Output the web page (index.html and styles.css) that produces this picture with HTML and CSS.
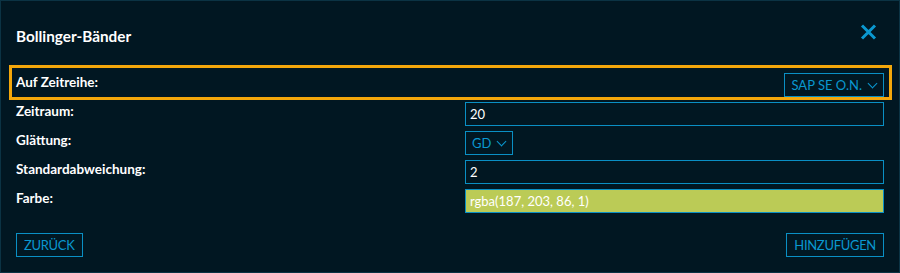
FILE: index.html
```html
<!DOCTYPE html>
<html lang="de">
<head>
    <meta charset="UTF-8">
    <meta name="viewport" content="width=device-width, initial-scale=1.0">
    <title>Bollinger-Bänder</title>
    <link rel="stylesheet" href="styles.css">
</head>
<body>
    <div class="dialog">
        <div class="dialog-header">
            <h1 class="dialog-title">Bollinger-Bänder</h1>
            <button class="close-button" aria-label="Schließen">
                <svg width="17" height="16" viewBox="0 0 17 16">
                    <path d="M2 1.5 L15 14.5 M15 1.5 L2 14.5" stroke="currentColor" stroke-width="3" fill="none"/>
                </svg>
            </button>
        </div>

        <div class="form">
            <div class="form-row highlight">
                <label>Auf Zeitreihe:</label>
                <button class="select select-right">SAP SE O.N. <span class="chevron"></span></button>
            </div>
            <div class="form-row">
                <label>Zeitraum:</label>
                <div class="input">20</div>
            </div>
            <div class="form-row">
                <label>Glättung:</label>
                <button class="select">GD <span class="chevron"></span></button>
            </div>
            <div class="form-row">
                <label>Standardabweichung:</label>
                <div class="input">2</div>
            </div>
            <div class="form-row">
                <label>Farbe:</label>
                <div class="input color-input" style="background-color: rgba(187, 203, 86, 1);">rgba(187, 203, 86, 1)</div>
            </div>
        </div>

        <div class="dialog-footer">
            <button class="text-button">Zurück</button>
            <button class="text-button">Hinzufügen</button>
        </div>
    </div>
</body>
</html>
```

FILE: styles.css
```css
body {
    margin: 0;
    background: #011722;
    font-family: Lato, "Liberation Sans", sans-serif;
}
.dialog {
    box-sizing: border-box;
    width: 900px;
    height: 273px;
    border: 1px solid #0b3344;
    background: #011722;
    padding: 0 15px 15px 15px;
    display: flex;
    flex-direction: column;
}
.dialog-header {
    display: flex;
    justify-content: space-between;
    align-items: flex-start;
    height: 64px;
}
.dialog-title {
    margin: 25px 0 0 0;
    color: #fff;
    font-size: 15.3px;
    font-weight: bold;
    line-height: 20px;
}
.close-button {
    background: none;
    border: none;
    padding: 0;
    margin: 23px 7px 0 0;
    color: #0a98d0;
    cursor: pointer;
    display: flex;
}
.form {
    display: flex;
    flex-direction: column;
    gap: 5px;
}
.form-row {
    display: grid;
    grid-template-columns: 449px 1fr;
    align-items: start;
}
.form-row label {
    color: #fff;
    font-size: 13.5px;
    font-weight: bold;
    line-height: 16px;
    padding-top: 1px;
}
.highlight {
    margin: 0 -8px -3px -7px;
    padding: 5px 5px 0 4px;
    border: 3px solid #f4a70b;
}
.select {
    box-sizing: border-box;
    height: 24px;
    background: none;
    border: 1px solid #0a8fc4;
    color: #0a98d0;
    font-family: inherit;
    font-size: 13px;
    padding: 0 5px 0 6px;
    display: flex;
    align-items: center;
    gap: 7px;
    justify-self: start;
    cursor: pointer;
}
.select-right {
    justify-self: end;
}
.chevron {
    width: 6px;
    height: 6px;
    border-right: 1.5px solid #0a98d0;
    border-bottom: 1.5px solid #0a98d0;
    transform: rotate(45deg);
    margin: -4px 2px 0 0;
}
.input {
    box-sizing: border-box;
    height: 24px;
    border: 1px solid #0a8fc4;
    color: #fff;
    font-size: 13px;
    line-height: 22px;
    padding: 0 4px;
}
.dialog-footer {
    margin-top: auto;
    display: flex;
    justify-content: space-between;
}
.text-button {
    box-sizing: border-box;
    height: 24px;
    background: none;
    border: 1px solid #0a8fc4;
    color: #0a98d0;
    font-family: inherit;
    font-size: 13px;
    letter-spacing: -0.3px;
    text-transform: uppercase;
    padding: 0 7px;
    cursor: pointer;
}
```
